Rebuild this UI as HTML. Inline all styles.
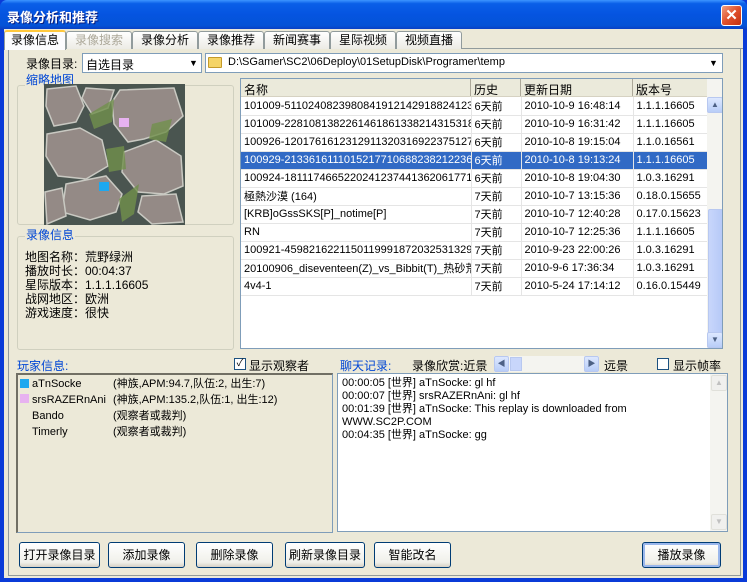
<!DOCTYPE html>
<html><head><meta charset="utf-8"><style>
*{box-sizing:border-box;margin:0;padding:0}
body{width:747px;height:582px;overflow:hidden;background:#0a3bd8;font-family:"Liberation Sans","Noto Sans CJK SC","WenQuanYi Zen Hei",sans-serif;font-size:12px;color:#000;position:relative}
.a{position:absolute;white-space:nowrap}
#title{left:0;top:0;width:747px;height:30px;background:linear-gradient(#3d95ff 0,#0a5fe8 12%,#0554e0 50%,#0453d6 85%,#0a3bc0 100%);border-radius:7px 7px 0 0}
#body{left:4px;top:29px;width:739px;height:549px;background:#ece9d8}
.blue{color:#0046d5}
.box{position:absolute;border:1px solid #d0d0bf;border-radius:3px}
.field{position:absolute;background:#fff;border:1px solid #7f9db9}
.btn{position:absolute;top:542px;height:26px;border:1px solid #003c74;border-radius:3px;background:linear-gradient(#fff,#f0f0ea 80%,#d6d0c5);text-align:center;line-height:24px;font-size:12px}
.tab{position:absolute;top:31px;height:18px;border:1px solid #919b9c;border-bottom:none;border-radius:3px 3px 0 0;background:linear-gradient(#fff,#ecebe5);line-height:16px;text-align:center;font-size:12px}
table{border-collapse:collapse;font-size:11px}
td{border-right:1px solid #e5e5e5;border-bottom:1px solid #e5e5e5;height:18px;padding:0 3px;overflow:hidden;white-space:nowrap;max-width:0}
tr.sel td{background:#316ac5;color:#fff}
.sb{position:absolute;background:#f4f4f0;}
.arr{position:absolute;width:16px;height:16px;border:1px solid #b8c8f0;border-radius:2px;background:linear-gradient(#dde8ff,#b8cdf8);color:#4d6185;font-size:8px;text-align:center;line-height:14px}
</style></head><body>
<div id="title" class="a"></div>
<div class="a" style="left:7px;top:7px;color:#fff;font-weight:bold;font-size:13px;text-shadow:1px 1px #0a1f80">录像分析和推荐</div>
<div class="a" style="left:721px;top:5px;width:21px;height:21px;border:1px solid #fff;border-radius:3px;background:linear-gradient(135deg,#f0a080,#e0502c 50%,#c23010);color:#fff;font-weight:bold;font-size:15px;text-align:center;line-height:19px">✕</div>
<div id="body" class="a"></div>

<div class="a" style="left:4px;top:48px;width:739px;height:1px;background:#919b9c"></div>
<div class="tab" style="left:4px;top:30px;width:62px;height:20px;background:#fcfcfe;border-top:2px solid #ffc83c;z-index:2">录像信息</div>
<div class="tab" style="left:66px;width:66px;color:#aca899">录像搜索</div>
<div class="tab" style="left:132px;width:66px">录像分析</div>
<div class="tab" style="left:198px;width:66px">录像推荐</div>
<div class="tab" style="left:264px;width:66px">新闻赛事</div>
<div class="tab" style="left:330px;width:66px">星际视频</div>
<div class="tab" style="left:396px;width:66px">视频直播</div>
<div class="a" style="left:8px;top:49px;width:733px;height:527px;border:1px solid #919b9c;border-top:none;background:#ece9d8"></div>

<div class="a" style="left:26px;top:55px">录像目录:</div>
<div class="field" style="left:82px;top:53px;width:120px;height:20px;padding:2px 3px">自选目录</div>
<div class="a" style="left:186px;top:54px;width:15px;height:18px;font-size:9px;line-height:18px;text-align:center">▼</div>
<div class="field" style="left:205px;top:53px;width:518px;height:20px;padding:2px 22px;font-size:11px">D:\SGamer\SC2\06Deploy\01SetupDisk\Programer\temp</div>
<div class="a" style="left:208px;top:57px;width:14px;height:11px;background:#f5d466;border:1px solid #c49a2a;border-radius:1px"></div>
<div class="a" style="left:706px;top:54px;width:15px;height:18px;font-size:9px;line-height:18px;text-align:center">▼</div>

<div class="box" style="left:17px;top:85px;width:217px;height:140px"></div>
<div class="a blue" style="left:25px;top:71px;background:#ece9d8;padding:0 1px">缩略地图</div>
<svg class="a" style="left:44px;top:84px" width="141" height="141" viewBox="0 0 141 141">
<rect width="141" height="141" fill="#4a5550"/>
<g fill="#948a86" stroke="#c9c9c2" stroke-width="1.5">
<path d="M3 5 L32 2 L40 22 L32 38 L10 42 L2 22Z"/>
<path d="M42 4 L70 6 L64 24 L48 30 L38 14Z"/>
<path d="M76 6 L130 4 L139 32 L122 48 L100 55 L84 58 L70 40 L68 18Z"/>
<path d="M3 50 L36 44 L58 56 L64 82 L42 95 L14 92 L2 72Z"/>
<path d="M80 68 L112 56 L137 72 L139 102 L120 110 L94 108 L78 88Z"/>
<path d="M22 100 L62 92 L78 110 L72 128 L46 136 L18 128Z"/>
<path d="M98 112 L132 110 L139 138 L108 140 L94 128Z"/>
<path d="M1 108 L18 104 L22 132 L3 140Z"/>
</g>
<g fill="#71904c" opacity=".8"><path d="M45 30 L70 15 L68 38 L50 45Z"/><path d="M62 65 L80 62 L82 85 L65 88Z"/><path d="M75 115 L95 100 L90 130 L78 138Z"/><path d="M108 40 L128 35 L122 58 L105 55Z"/></g>
<rect x="75" y="34" width="10" height="9" fill="#e7b2f0"/>
<rect x="55" y="98" width="10" height="9" fill="#1ea8ef"/>
</svg>
<div class="box" style="left:17px;top:236px;width:217px;height:114px"></div>
<div class="a blue" style="left:25px;top:226px;background:#ece9d8;padding:0 1px">录像信息</div>
<div class="a" style="left:25px;top:250px;line-height:14px;font-size:12px">地图名称：荒野绿洲<br>播放时长：00:04:37<br>星际版本：1.1.1.16605<br>战网地区：欧洲<br>游戏速度：很快</div>

<div class="field" style="left:240px;top:78px;width:483px;height:271px;overflow:hidden">
<div class="a" style="left:0;top:0;width:466px;height:18px;background:#ebeadb;border-bottom:1px solid #d6d2c2"></div>
<div class="a" style="left:3px;top:2px">名称</div><div class="a" style="left:229px;top:0;width:1px;height:17px;background:#aca899"></div>
<div class="a" style="left:233px;top:2px">历史</div><div class="a" style="left:279px;top:0;width:1px;height:17px;background:#aca899"></div>
<div class="a" style="left:283px;top:2px">更新日期</div><div class="a" style="left:391px;top:0;width:1px;height:17px;background:#aca899"></div>
<div class="a" style="left:395px;top:2px">版本号</div>
<table class="a" style="left:0;top:18px;width:466px;table-layout:fixed">
<colgroup><col style="width:230px"><col style="width:50px"><col style="width:112px"><col style="width:74px"></colgroup>
<tr><td>101009-51102408239808419121429188241234</td><td>6天前</td><td>2010-10-9 16:48:14</td><td>1.1.1.16605</td></tr>
<tr><td>101009-22810813822614618613382143153189</td><td>6天前</td><td>2010-10-9 16:31:42</td><td>1.1.1.16605</td></tr>
<tr><td>100926-12017616123129113203169223751279</td><td>6天前</td><td>2010-10-8 19:15:04</td><td>1.1.0.16561</td></tr>
<tr class="sel"><td>100929-21336161110152177106882382122369</td><td>6天前</td><td>2010-10-8 19:13:24</td><td>1.1.1.16605</td></tr>
<tr><td>100924-18111746652202412374413620617715</td><td>6天前</td><td>2010-10-8 19:04:30</td><td>1.0.3.16291</td></tr>
<tr><td>極熱沙漠 (164)</td><td>7天前</td><td>2010-10-7 13:15:36</td><td>0.18.0.15655</td></tr>
<tr><td>[KRB]oGssSKS[P]_notime[P]</td><td>7天前</td><td>2010-10-7 12:40:28</td><td>0.17.0.15623</td></tr>
<tr><td>RN</td><td>7天前</td><td>2010-10-7 12:25:36</td><td>1.1.1.16605</td></tr>
<tr><td>100921-45982162211501199918720325313294</td><td>7天前</td><td>2010-9-23 22:00:26</td><td>1.0.3.16291</td></tr>
<tr><td>20100906_diseventeen(Z)_vs_Bibbit(T)_热砂荒漠</td><td>7天前</td><td>2010-9-6 17:36:34</td><td>1.0.3.16291</td></tr>
<tr><td>4v4-1</td><td>7天前</td><td>2010-5-24 17:14:12</td><td>0.16.0.15449</td></tr>
</table>
<div class="sb" style="left:466px;top:0;width:16px;height:269px"></div>
<div class="arr" style="left:466px;top:18px">▲</div>
<div class="a" style="left:467px;top:130px;width:15px;height:130px;border:1px solid #b8c8f0;border-radius:2px;background:linear-gradient(90deg,#c8d6fb,#b6c9f7)"></div>
<div class="arr" style="left:466px;top:253px">▼</div>
</div>

<div class="a blue" style="left:17px;top:357px">玩家信息:</div>
<div class="a" style="left:234px;top:358px;width:12px;height:12px;border:1px solid #1c5180;background:#fff;font-size:10px;line-height:10px;text-align:center">✓</div>
<div class="a" style="left:249px;top:357px">显示观察者</div>
<div class="a" style="left:16px;top:373px;width:317px;height:160px;border:1px solid #7f9db9;border-top:2px solid #716f64;border-left:2px solid #716f64"></div>
<div class="a" style="left:20px;top:379px;width:9px;height:9px;background:#1ea8ef"></div>
<div class="a" style="left:20px;top:394px;width:9px;height:9px;background:#e7b2f0"></div>
<div class="a" style="left:32px;top:376px;line-height:16px;font-size:11px">aTnSocke<br>srsRAZERnAni<br>Bando<br>Timerly</div>
<div class="a" style="left:113px;top:376px;line-height:16px;font-size:11px">(神族,APM:94.7,队伍:2, 出生:7)<br>(神族,APM:135.2,队伍:1, 出生:12)<br>(观察者或裁判)<br>(观察者或裁判)</div>

<div class="a blue" style="left:340px;top:357px">聊天记录:</div>
<div class="a" style="left:412px;top:357px">录像欣赏:近景</div>
<div class="a" style="left:494px;top:356px;width:105px;height:16px;background:#f4f4f0"></div>
<div class="arr" style="left:494px;top:356px;width:15px">◀</div>
<div class="a" style="left:510px;top:357px;width:12px;height:14px;border:1px solid #b8c8f0;background:#c8d6fb"></div>
<div class="arr" style="left:584px;top:356px;width:15px">▶</div>
<div class="a" style="left:604px;top:357px">远景</div>
<div class="a" style="left:657px;top:358px;width:12px;height:12px;border:1px solid #1c5180;background:#fff"></div>
<div class="a" style="left:673px;top:357px">显示帧率</div>
<div class="field" style="left:337px;top:373px;width:391px;height:159px"></div>
<div class="sb" style="left:710px;top:374px;width:17px;height:157px"></div>
<div class="arr" style="left:711px;top:375px;background:#f0f0ee;border-color:#e0e0da;color:#c0c0c0">▲</div>
<div class="arr" style="left:711px;top:514px;background:#f0f0ee;border-color:#e0e0da;color:#c0c0c0">▼</div>
<div class="a" style="left:342px;top:377px;line-height:13px;font-size:11px">00:00:05 [世界] aTnSocke: gl hf<br>00:00:07 [世界] srsRAZERnAni: gl hf<br>00:01:39 [世界] aTnSocke: This replay is downloaded from<br>WWW.SC2P.COM<br>00:04:35 [世界] aTnSocke: gg</div>

<div class="btn" style="left:19px;width:81px">打开录像目录</div>
<div class="btn" style="left:108px;width:77px">添加录像</div>
<div class="btn" style="left:196px;width:77px">删除录像</div>
<div class="btn" style="left:285px;width:80px">刷新录像目录</div>
<div class="btn" style="left:374px;width:77px">智能改名</div>
<div class="btn" style="left:642px;width:79px;box-shadow:inset 0 0 0 2px #9ab7ec">播放录像</div>
</body></html>
